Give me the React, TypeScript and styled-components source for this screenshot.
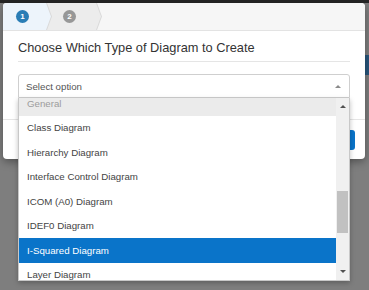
import React, { useEffect, useRef } from 'react';
import styled, { createGlobalStyle } from 'styled-components';

const GlobalStyle = createGlobalStyle`
  html, body {
    margin: 0;
    padding: 0;
  }
  body {
    font-family: "Liberation Sans", Arial, sans-serif;
    background: #7e7e7e;
  }
  * {
    box-sizing: border-box;
  }
`;

const Page = styled.div`
  position: relative;
  width: 369px;
  height: 290px;
  overflow: hidden;
  background: #7e7e7e;
`;

const TopBar = styled.div`
  height: 3px;
  background: #262626;
`;

const Behind = styled.div`
  display: flex;
  justify-content: flex-end;
  padding-top: 52px;
`;

const DimButton = styled.div`
  width: 40px;
  height: 20px;
  margin-right: -20px;
  border-radius: 3px;
  background: #28567c;
`;

const Modal = styled.div`
  position: absolute;
  top: 3px;
  left: 3px;
  width: 362px;
  height: 156px;
  display: flex;
  flex-direction: column;
  background: #ffffff;
  border-radius: 4px;
  box-shadow: 0 3px 9px rgba(0, 0, 0, 0.35);
`;

const arrow = 'polygon(0 0, calc(100% - 5px) 0, 100% 50%, calc(100% - 5px) 100%, 0 100%)';

const Steps = styled.div`
  display: flex;
  height: 28px;
  background: #f6f6f6;
  border-bottom: 1px solid #e3e3e3;
  border-radius: 4px 4px 0 0;
  overflow: hidden;
`;

const StepEdge = styled.div<{ $first?: boolean; $width: number }>`
  position: relative;
  z-index: ${p => (p.$first ? 2 : 1)};
  width: ${p => p.$width}px;
  margin-left: ${p => (p.$first ? 0 : -5)}px;
  padding-right: 1px;
  background: #d9d9d9;
  clip-path: ${arrow};
`;

const StepFill = styled.div<{ $active?: boolean; $pad: number }>`
  height: 100%;
  display: flex;
  align-items: center;
  padding-left: ${p => p.$pad}px;
  background: ${p => (p.$active ? '#edf4fb' : '#ececec')};
  clip-path: ${arrow};
`;

const StepNum = styled.span<{ $active?: boolean }>`
  width: 13px;
  height: 13px;
  border-radius: 50%;
  display: flex;
  align-items: center;
  justify-content: center;
  background: ${p => (p.$active ? '#2a7db5' : '#979797')};
  color: #ffffff;
  font-size: 8px;
  font-weight: 700;
  line-height: 1;
`;

const Body = styled.div`
  padding: 8px 15px 21px;
`;

const Title = styled.h4`
  margin: 0;
  padding-bottom: 4px;
  border-bottom: 1px solid #e5e5e5;
  font-size: 12.8px;
  font-weight: 400;
  line-height: 18px;
  color: #333333;
`;

const SelectWrap = styled.div`
  position: relative;
  margin-top: 12px;
`;

const SelectBox = styled.div`
  height: 24px;
  display: flex;
  align-items: center;
  justify-content: space-between;
  padding: 0 8px 0 7px;
  border: 1px solid #cfcfcf;
  border-radius: 3px 3px 0 0;
  font-size: 9.7px;
  color: #555555;
`;

const Caret = styled.span<{ $down?: boolean; $color: string }>`
  width: 0;
  height: 0;
  border-left: 3px solid transparent;
  border-right: 3px solid transparent;
  ${p => (p.$down ? 'border-top' : 'border-bottom')}: 3.5px solid ${p => p.$color};
`;

const Listbox = styled.div`
  position: absolute;
  z-index: 5;
  top: 100%;
  left: 0;
  right: 0;
  height: 183px;
  display: flex;
  background: #ffffff;
  border: 1px solid #c8c8c8;
  border-top: 0;
  box-shadow: 0 2px 5px rgba(0, 0, 0, 0.25);
`;

const Options = styled.ul`
  flex: 1;
  margin: 0;
  padding: 0;
  list-style: none;
  overflow: hidden;
`;

const Option = styled.li<{ $group?: boolean; $selected?: boolean }>`
  height: 24.5px;
  display: flex;
  align-items: center;
  padding-left: 8px;
  font-size: 9.7px;
  color: ${p => (p.$selected ? '#ffffff' : p.$group ? '#9c9c9c' : '#444444')};
  background: ${p => (p.$selected ? '#0a74c9' : p.$group ? '#ebebeb' : 'transparent')};
`;

const Scrollbar = styled.div`
  width: 13px;
  display: flex;
  flex-direction: column;
  background: #f0f0f0;
`;

const ScrollArrow = styled.div`
  height: 17px;
  display: flex;
  align-items: center;
  justify-content: center;
`;

const Track = styled.div`
  flex: 1;
`;

const Thumb = styled.div<{ $top: number; $size: number }>`
  margin: ${p => p.$top}px 1px 0;
  height: ${p => p.$size}px;
  background: #c1c1c1;
`;

const Footer = styled.div`
  flex: 1;
  display: flex;
  align-items: center;
  justify-content: flex-end;
  padding: 0 10px;
  border-top: 1px solid #e5e5e5;
`;

const PrimaryButton = styled.button`
  width: 64px;
  height: 20px;
  border: 0;
  border-radius: 3px;
  background: #0a74c9;
  color: #ffffff;
  font-family: inherit;
  font-size: 9.7px;
`;

const options = [
  { label: 'General', group: true },
  { label: 'Class Diagram' },
  { label: 'Hierarchy Diagram' },
  { label: 'Interface Control Diagram' },
  { label: 'ICOM (A0) Diagram' },
  { label: 'IDEF0 Diagram' },
  { label: 'I-Squared Diagram', selected: true },
  { label: 'Layer Diagram' },
];

export default function App() {
  const listRef = useRef<HTMLUListElement>(null);

  useEffect(() => {
    if (listRef.current) listRef.current.scrollTop = 7;
  }, []);

  return (
    <Page>
      <GlobalStyle />
      <TopBar />
      <Behind>
        <DimButton />
      </Behind>
      <Modal>
        <Steps>
          <StepEdge $first $width={49}>
            <StepFill $active $pad={13}>
              <StepNum $active>1</StepNum>
            </StepFill>
          </StepEdge>
          <StepEdge $width={55}>
            <StepFill $pad={16}>
              <StepNum>2</StepNum>
            </StepFill>
          </StepEdge>
        </Steps>
        <Body>
          <Title>Choose Which Type of Diagram to Create</Title>
          <SelectWrap>
            <SelectBox>
              Select option
              <Caret $color="#8a8a8a" />
            </SelectBox>
            <Listbox>
              <Options ref={listRef}>
                {options.map(o => (
                  <Option key={o.label} $group={o.group} $selected={o.selected}>
                    {o.label}
                  </Option>
                ))}
              </Options>
              <Scrollbar>
                <ScrollArrow>
                  <Caret $color="#505050" />
                </ScrollArrow>
                <Track>
                  <Thumb $top={76} $size={42} />
                </Track>
                <ScrollArrow>
                  <Caret $down $color="#505050" />
                </ScrollArrow>
              </Scrollbar>
            </Listbox>
          </SelectWrap>
        </Body>
        <Footer>
          <PrimaryButton>Create</PrimaryButton>
        </Footer>
      </Modal>
    </Page>
  );
}
